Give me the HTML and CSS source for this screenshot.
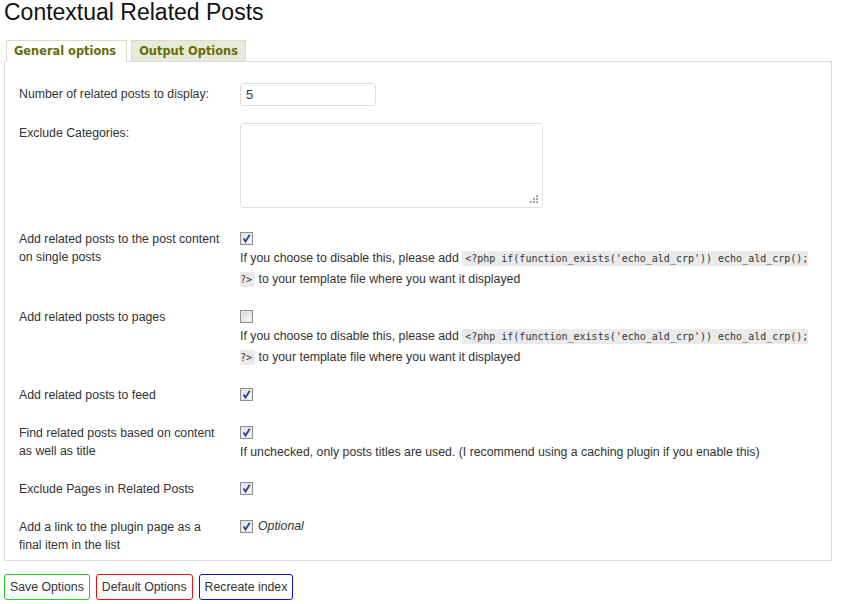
FILE: index.html
```html
<!DOCTYPE html>
<html>
<head>
<meta charset="utf-8">
<link rel="stylesheet" href="styles.css">
</head>
<body>
<div class="wrap">
  <h2 class="title">Contextual Related Posts</h2>
  <div class="tabs">
    <span class="tab active">General options</span>
    <span class="tab">Output Options</span>
  </div>
  <div class="panel">
    <div class="row">
      <div class="th">Number of related posts to display:</div>
      <div class="td"><input class="text" type="text" value="5"></div>
    </div>
    <div class="row r-area">
      <div class="th">Exclude Categories:</div>
      <div class="td">
        <div class="area-wrap">
          <textarea class="area"></textarea>
          <svg class="grip" width="9" height="9" viewBox="0 0 9 9"><g fill="#a8a8a8"><rect x="7" y="1" width="2" height="2"/><rect x="4" y="4" width="2" height="2"/><rect x="7" y="4" width="2" height="2"/><rect x="1" y="7" width="2" height="2"/><rect x="4" y="7" width="2" height="2"/><rect x="7" y="7" width="2" height="2"/></g></svg>
        </div>
      </div>
    </div>
    <div class="row">
      <div class="th">Add related posts to the post content on single posts</div>
      <div class="td">
        <div class="cbline"><span class="cb checked"><svg width="11" height="11" viewBox="0 0 11 11"><path d="M2.5 5.5 L4.5 8.5 L8.8 1.8" fill="none" stroke="#2b3f96" stroke-width="1.8"/></svg></span></div>
        <p class="desc">If you choose to disable this, please add <code>&lt;?php if(function_exists('echo_ald_crp')) echo_ald_crp(); <span class="nw">?&gt;</span></code> to your template file where you want it displayed</p>
      </div>
    </div>
    <div class="row">
      <div class="th">Add related posts to pages</div>
      <div class="td">
        <div class="cbline"><span class="cb"></span></div>
        <p class="desc">If you choose to disable this, please add <code>&lt;?php if(function_exists('echo_ald_crp')) echo_ald_crp(); <span class="nw">?&gt;</span></code> to your template file where you want it displayed</p>
      </div>
    </div>
    <div class="row">
      <div class="th">Add related posts to feed</div>
      <div class="td">
        <div class="cbline"><span class="cb checked"><svg width="11" height="11" viewBox="0 0 11 11"><path d="M2.5 5.5 L4.5 8.5 L8.8 1.8" fill="none" stroke="#2b3f96" stroke-width="1.8"/></svg></span></div>
      </div>
    </div>
    <div class="row">
      <div class="th">Find related posts based on content as well as title</div>
      <div class="td">
        <div class="cbline"><span class="cb checked"><svg width="11" height="11" viewBox="0 0 11 11"><path d="M2.5 5.5 L4.5 8.5 L8.8 1.8" fill="none" stroke="#2b3f96" stroke-width="1.8"/></svg></span></div>
        <p class="desc plain">If unchecked, only posts titles are used. (I recommend using a caching plugin if you enable this)</p>
      </div>
    </div>
    <div class="row">
      <div class="th">Exclude Pages in Related Posts</div>
      <div class="td">
        <div class="cbline"><span class="cb checked"><svg width="11" height="11" viewBox="0 0 11 11"><path d="M2.5 5.5 L4.5 8.5 L8.8 1.8" fill="none" stroke="#2b3f96" stroke-width="1.8"/></svg></span></div>
      </div>
    </div>
    <div class="row last">
      <div class="th">Add a link to the plugin page as a final item in the list</div>
      <div class="td">
        <div class="cbline"><span class="cb checked"><svg width="11" height="11" viewBox="0 0 11 11"><path d="M2.5 5.5 L4.5 8.5 L8.8 1.8" fill="none" stroke="#2b3f96" stroke-width="1.8"/></svg></span><em class="opt">Optional</em></div>
      </div>
    </div>
  </div>
  <div class="buttons">
    <button class="btn green">Save Options</button>
    <button class="btn red">Default Options</button>
    <button class="btn blue">Recreate index</button>
  </div>
</div>
</body>
</html>
```
FILE: styles.css
```css
html, body {
  margin: 0;
  padding: 0;
  background: #fff;
}
body {
  font-family: "Liberation Sans", Arial, sans-serif;
  font-size: 12.3px;
  color: #333;
}
.wrap {
  padding-left: 4px;
  width: 828px;
}
.title {
  margin: 0;
  font-family: "Liberation Sans", Arial, sans-serif;
  font-weight: normal;
  font-size: 23px;
  line-height: 24px;
  color: #111;
}
.tabs {
  display: flex;
  gap: 4px;
  margin: 16px 0 0 2px;
  height: 21px;
}
.tab {
  display: block;
  height: 20px;
  line-height: 21px;
  padding: 0 10px 0 7px;
  border: 1px solid #e0d9c4;
  border-bottom: none;
  background: #e5ebd8;
  font-family: "DejaVu Sans", Verdana, sans-serif;
  font-weight: bold;
  font-size: 11.4px;
  color: #6b6b08;
  white-space: nowrap;
}
.tab + .tab {
  padding: 0 7px 0 7px;
}
.tab.active {
  background: #fff;
  height: 21px;
  position: relative;
  z-index: 2;
}
.panel {
  border: 1px solid #dcdcdc;
  padding: 13px 0 0 0;
  height: 485px;
  box-sizing: content-box;
}
.row {
  display: grid;
  grid-template-columns: 221px 1fr;
  padding-left: 14px;
}
.th {
  padding: 10px 16px 10px 0;
  line-height: 18px;
}
.td {
  padding: 8px 12px 8px 0;
  line-height: 20px;
}
.r-area .td {
  padding: 9px 12px 12px 0;
}
.text {
  display: block;
  width: 136px;
  height: 23px;
  box-sizing: border-box;
  border: 1px solid #dfdfdf;
  border-radius: 3px;
  padding: 0 5px;
  font-family: "Liberation Sans", Arial, sans-serif;
  font-size: 13px;
  color: #333;
  background: #fff;
  outline: none;
}
.area-wrap {
  position: relative;
  width: 303px;
  height: 85px;
}
.area {
  display: block;
  width: 303px;
  height: 85px;
  box-sizing: border-box;
  border: 1px solid #dfdfdf;
  border-radius: 3px;
  resize: none;
  margin: 0;
  background: #fff;
}
.grip {
  position: absolute;
  right: 5px;
  bottom: 5px;
}
.cbline {
  height: 20px;
  display: flex;
  align-items: center;
}
.cb {
  display: inline-flex;
  align-items: center;
  justify-content: center;
  width: 13px;
  height: 13px;
  box-sizing: border-box;
  border: 1px solid #8e8f8f;
  background: linear-gradient(135deg, #dcdcdc 0%, #f4f4f4 60%, #ffffff 100%);
  box-shadow: inset 0 0 0 1px #e6e6e6;
}
.cb:not(.checked) {
  background: linear-gradient(135deg, #cfcfcf 0%, #ebebeb 55%, #ffffff 100%);
}
.cb svg { display: block; }
.opt {
  margin-left: 5px;
  font-style: italic;
  color: #333;
}
.desc {
  margin: 0;
  line-height: 21px;
}
.desc.plain { line-height: 20px; }
code {
  font-family: "DejaVu Sans Mono", "Liberation Mono", monospace;
  font-size: 10px;
  background: #eaeaea;
  padding: 2px 3px;
  color: #333;
}
.nw { white-space: nowrap; }
.buttons {
  display: flex;
  gap: 6px;
  margin-top: 13px;
}
.btn {
  height: 26px;
  padding: 0 5px;
  background: #fff;
  border: 1px solid;
  border-radius: 3px;
  font-family: "Liberation Sans", Arial, sans-serif;
  font-size: 12.3px;
  color: #333;
}
.btn.green { border-color: #22cc22; }
.btn.red { border-color: #ee1111; }
.btn.blue { border-color: #1111cc; }
```
